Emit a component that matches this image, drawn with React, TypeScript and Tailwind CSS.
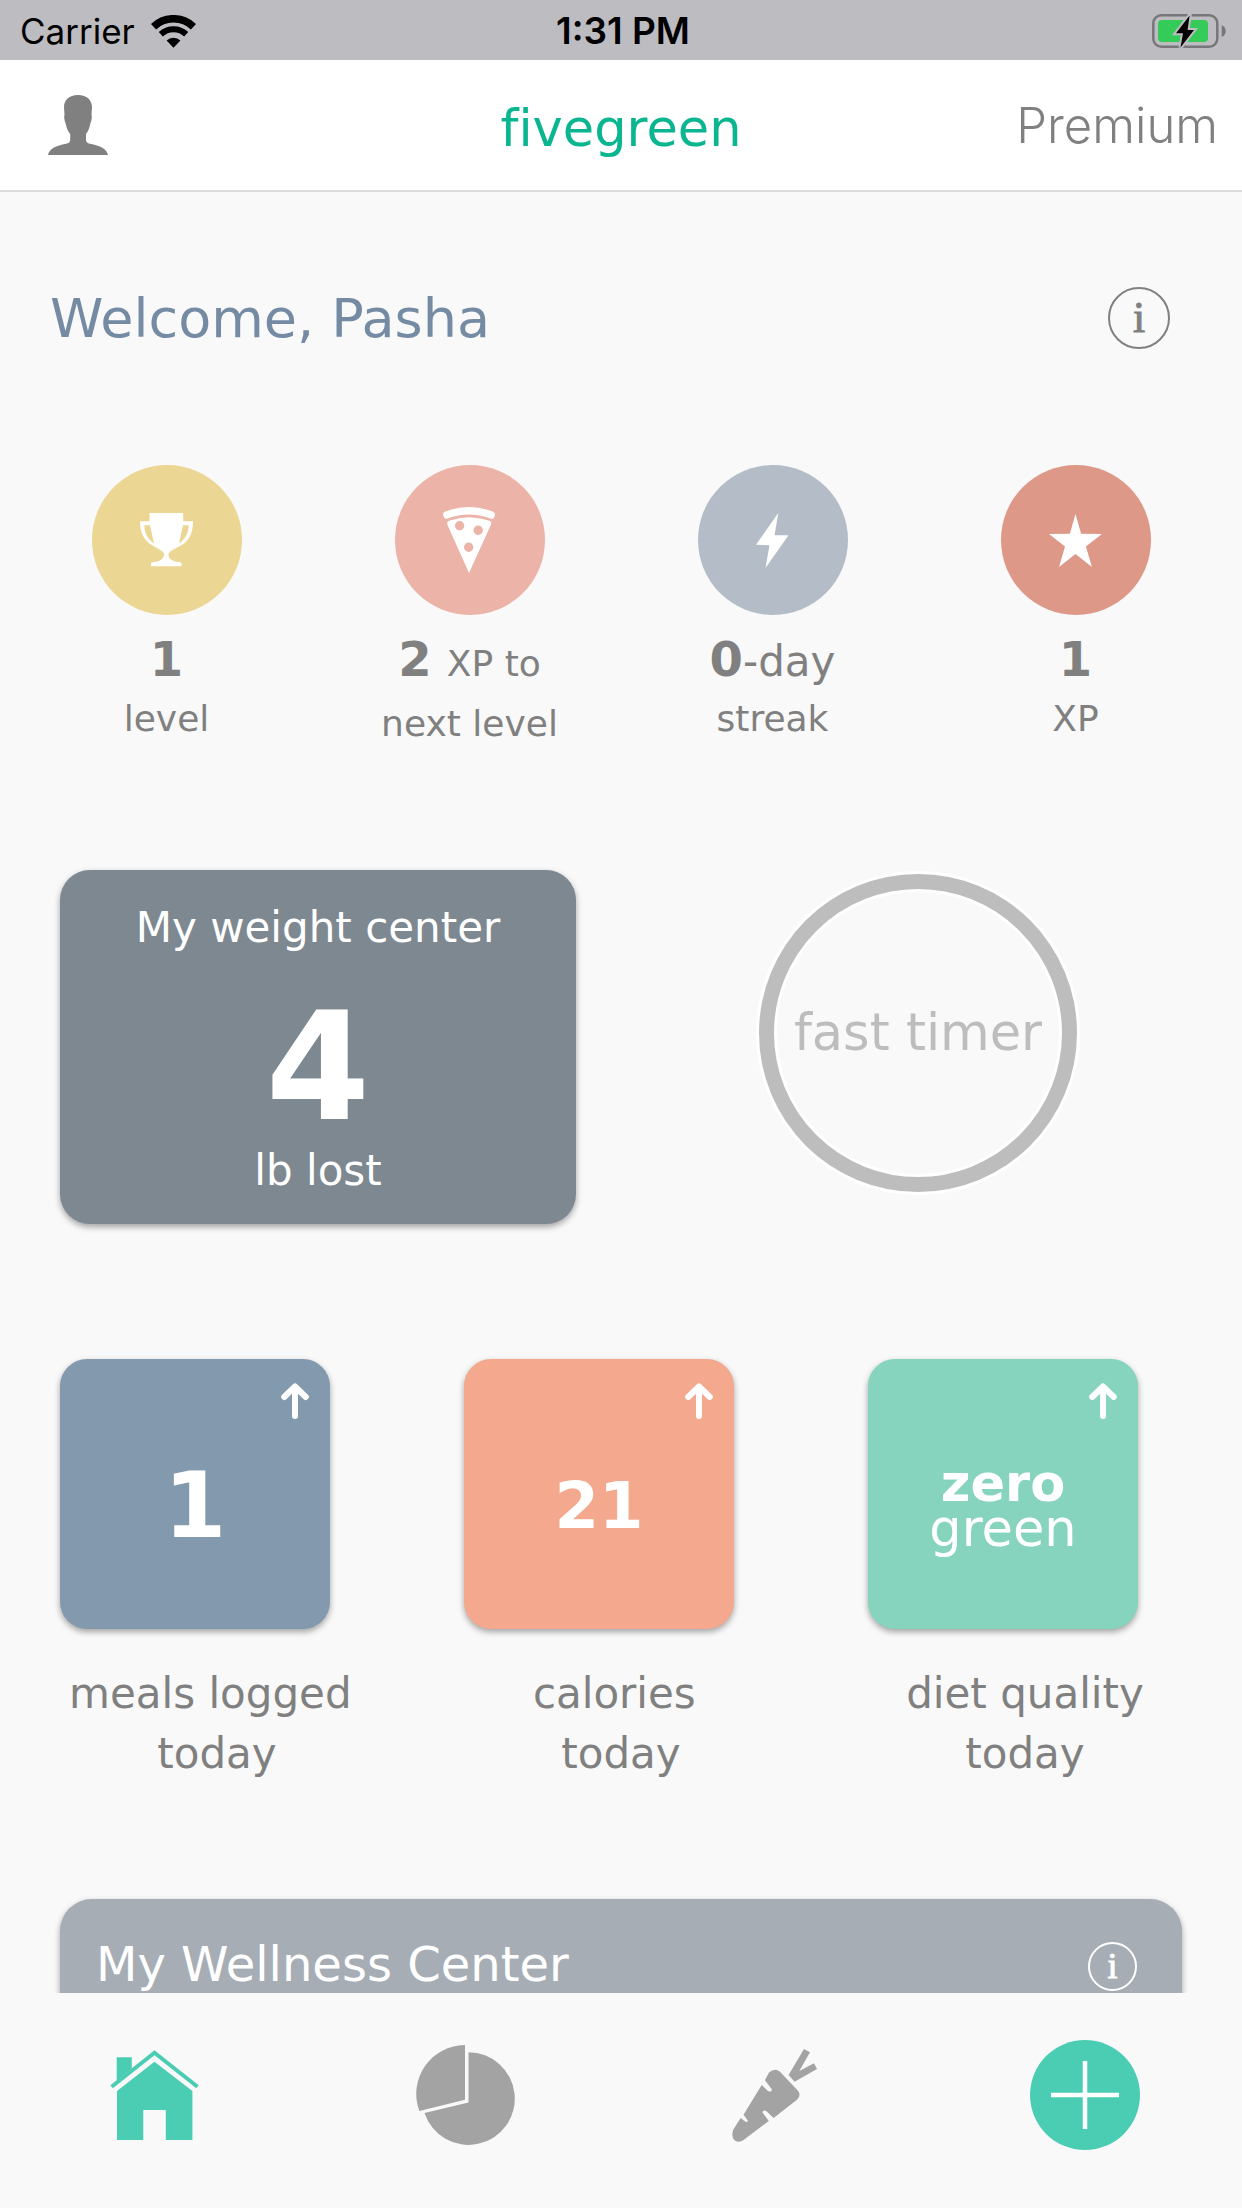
import type { ReactNode } from "react";

function WifiIcon() {
  return (
    <svg width="45" height="33" viewBox="0 0 45 33" fill="none" stroke="#000" aria-hidden="true">
      <path d="M2.5 11.7A29 29 0 0 1 42.5 11.7" strokeWidth="7.5" />
      <path d="M9.8 19.3A18.5 18.5 0 0 1 35.2 19.3" strokeWidth="6" />
      <path d="M15.6 25.5A10 10 0 0 1 29.4 25.5L22.5 32.7Z" fill="#000" stroke="none" />
    </svg>
  );
}

function BatteryIcon() {
  return (
    <svg width="74" height="35" viewBox="0 0 74 35" aria-hidden="true">
      <rect x="1.3" y="1.3" width="64" height="31.4" rx="8" fill="none" stroke="#77777b" strokeWidth="2.5" />
      <rect x="6" y="6" width="50" height="22" rx="4" fill="#35cb58" />
      <path d="M69.7 11Q73.7 13 73.7 17T69.7 23Z" fill="#77777b" />
      <path
        d="M37.6 1.5L24 19.3H31L28.5 33.5L42 16H35.6Z"
        fill="#000"
        stroke="#bdbcc1"
        strokeWidth="4"
        paintOrder="stroke"
      />
    </svg>
  );
}

function PersonIcon() {
  return (
    <svg width="60" height="60" viewBox="0 0 60 60" fill="#808080" aria-hidden="true">
      <path d="M30 0C39 0 44 5.500 44 12L43.500 19.500Q44.500 23 42.500 28C41.500 33 40 36.500 38 39V45Q38 48 42 48.700C52 50.500 59 54 60 60H0C1 54 8 50.500 18 48.700Q22.200 48 22.200 45V39C20 36.500 18.500 33 17.500 28Q15.500 23 16.500 19.500L16 12C16 5.500 21 0 30 0Z" />
    </svg>
  );
}

function TrophyIcon() {
  return (
    <svg width="53" height="54" viewBox="0 0 53 54" fill="#fff" fillRule="evenodd" aria-hidden="true">
      <path d="M9.5 0H43.2V8.3H53C53 22 48 30 37 34.500C32 37 28.700 39 28.500 41C28.300 45 31 48.500 39 49Q41.600 49 41.600 50.500V53.300H11V50.500Q11 49 14 49C21 48.500 24.300 45 24 41C23.800 39 20 36.500 16 34.500C5 29 0 22 0 8.300H9.500ZM4.400 12.300H10L14 30.500C7.500 26 4.400 20 4.400 12.300ZM48.600 12.300H43L39 30.500C45.500 26 48.600 20 48.600 12.300Z" />
    </svg>
  );
}

function PizzaIcon() {
  return (
    <svg width="53" height="66" viewBox="0 0 53 66" fill="#fff" fillRule="evenodd" aria-hidden="true">
      <path d="M2.500 4.500Q26 -4.500 49.500 4.500Q52.500 5.500 52 8L51 10.500Q50 12.500 47.500 11.500Q26 3.500 4.500 11.500Q2 12.500 1 10.500L0.200 8Q-0.500 5.500 2.500 4.500Z" />
      <path d="M6 13.800Q26 6.500 46.500 13.800Q49 15 48 17.500L26 66L4.300 17.500Q3.500 15 6 13.800ZM11.900 18.700a4.700 4.700 0 1 0 9.400 0a4.700 4.700 0 1 0 -9.400 0ZM30.500 23.300a4.700 4.700 0 1 0 9.400 0a4.700 4.700 0 1 0 -9.400 0ZM21 40.300a4.700 4.700 0 1 0 9.400 0a4.700 4.700 0 1 0 -9.400 0Z" />
    </svg>
  );
}

function BoltIcon() {
  return (
    <svg width="34" height="55" viewBox="0 0 34 55" fill="#fff" aria-hidden="true">
      <path d="M22.2 0L18.600 22.300H32.500L9.500 55L13.500 32.300L0 31.800Z" />
    </svg>
  );
}

function StarIcon() {
  return (
    <svg width="53" height="53" viewBox="0 0 52.300 52.300" fill="#fff" aria-hidden="true">
      <path d="M26.100 0L31.700 19.500L52.300 19.700L36.400 32L42.400 52.300L26.100 39.500L9.900 52.300L15.800 32L0 19.700L20.600 19.500Z" />
    </svg>
  );
}

function ArrowUpIcon() {
  return (
    <svg
      width="28"
      height="36"
      viewBox="0 0 28 36"
      fill="none"
      stroke="#fff"
      strokeWidth="6"
      strokeLinecap="round"
      strokeLinejoin="round"
      aria-hidden="true"
    >
      <path d="M14 33V4M3.200 14L14 3.500L24.800 14" />
    </svg>
  );
}

function HomeIcon() {
  return (
    <svg width="90" height="90" viewBox="0 0 90 90" fill="#4bcdb3" aria-hidden="true">
      <path d="M1.600 36.700L44.500 2.800L87.500 36.700" fill="none" stroke="#4bcdb3" strokeWidth="4" />
      <path d="M6.700 7.300H21.800V18.500L6.700 31Z" />
      <path d="M44.500 11.700L82.400 41V90H55.800V60H33.300V90H7V41Z" />
    </svg>
  );
}

function PieIcon() {
  return (
    <svg width="100" height="100" viewBox="0 0 100 100" fill="#a3a3a3" aria-hidden="true">
      <path d="M50 0V54.700L4.300 66A49 49 0 0 1 50 0Z" />
      <path d="M53.500 7.300A46.300 46.300 0 1 1 9.500 68L53.500 57.500Z" />
    </svg>
  );
}

function CarrotIcon() {
  return (
    <svg width="86" height="93" viewBox="0 0 86 93" fill="#a3a3a3" aria-hidden="true">
      <path d="M72 0L78 3.300L67.300 22L82 14.300L85 20L62.600 32.700L56.600 26Z" />
      <path d="M37 23.500Q42.500 18.500 48 22.700L66 41.700Q69.500 46.500 65 50.700L41.600 69L34.500 62.300Q31 60 30.500 63.500L36.800 72L11.900 90.700Q6 95 1.800 90.500Q-1 86 1.600 80L8.700 69L13.500 72.700Q16 73.500 15.800 71.500L11.500 65.700L29.700 36L36 42Q40 43.500 40 40.500L32.900 31.300Z" />
    </svg>
  );
}

function PlusIcon() {
  return (
    <svg width="68" height="68" viewBox="0 0 68 68" stroke="#fff" strokeWidth="4.500" aria-hidden="true">
      <path d="M34 0V68M0 34H68" />
    </svg>
  );
}

function Stat({
  color,
  icon,
  children,
  caption,
}: {
  color: string;
  icon: ReactNode;
  children: ReactNode;
  caption: string;
}) {
  return (
    <div className="flex flex-col items-center text-center text-[#808080]">
      <div className={`flex size-[150px] items-center justify-center rounded-full ${color}`}>{icon}</div>
      <p className="mt-[14px] text-[48px] leading-[60px]">{children}</p>
      <p className="text-[36px] leading-[60px]">{caption}</p>
    </div>
  );
}

function Tile({ color, label, children }: { color: string; label: string; children: ReactNode }) {
  return (
    <div>
      <button
        type="button"
        className={`relative ml-[45px] flex size-[270px] flex-col items-center justify-center rounded-[27px] pt-6 text-white shadow-[0_3px_6px_rgba(0,0,0,0.35)] ${color}`}
      >
        <span className="absolute top-6 right-[21px]">
          <ArrowUpIcon />
        </span>
        {children}
      </button>
      <p className="mt-[35px] text-center text-[42px] leading-[60px] whitespace-pre text-[#808080]">
        {label}
        <br />
        today
      </p>
    </div>
  );
}

export default function App() {
  return (
    <div className="flex h-dvh flex-col bg-[#f9f9f9] font-['DejaVu_Sans',sans-serif]">
      <div className="grid h-[60px] shrink-0 grid-cols-[1fr_auto_1fr] items-center bg-[#bdbcc1] pt-0.5 pr-4 pl-5 font-['Inter',sans-serif] text-[35px] leading-[58px] text-black">
        <div className="flex items-center gap-4">
          <span>Carrier</span>
          <WifiIcon />
        </div>
        <span className="text-center text-[37px] font-semibold">1:31 PM</span>
        <div className="flex justify-end">
          <BatteryIcon />
        </div>
      </div>

      <header className="grid h-[132px] shrink-0 grid-cols-3 items-center border-b-2 border-[#dcdcdc] bg-white">
        <button type="button" aria-label="Profile" className="ml-12 justify-self-start">
          <PersonIcon />
        </button>
        <h1 className="pt-2 text-center text-[51px] leading-[60px] text-[#0ab68f] [font-variant-ligatures:none]">
          fivegreen
        </h1>
        <a
          href="#premium"
          className="mr-6 justify-self-end pt-0.5 font-['Inter',sans-serif] text-[49px] leading-[60px] font-light text-[#808080]"
        >
          Premium
        </a>
      </header>

      <main className="min-h-0 flex-1 overflow-y-auto pt-[95px] [scrollbar-width:none]">
        <div className="flex h-[62px] items-center justify-between pr-[72px] pl-[50px]">
          <h2 className="pt-0.5 text-[54px] leading-[62px] text-[#748ba3]">Welcome, Pasha</h2>
          <button
            type="button"
            aria-label="About this screen"
            className="flex size-[62px] items-center justify-center rounded-full border-2 border-[#808080] font-['Liberation_Serif',serif] text-[44px] leading-none text-[#808080] [-webkit-text-stroke:1px]"
          >
            i
          </button>
        </div>

        <section className="mt-[116px] grid grid-cols-4 px-[15px]">
          <Stat color="bg-[#ebd693]" icon={<TrophyIcon />} caption="level">
            <b>1</b>
          </Stat>
          <Stat color="bg-[#ecb4a8]" icon={<PizzaIcon />} caption="next level">
            <b>2</b> <span className="text-[36px]">XP to</span>
          </Stat>
          <Stat color="bg-[#b4bdc7]" icon={<BoltIcon />} caption="streak">
            <b>0</b>
            <span className="text-[42px] leading-none">-day</span>
          </Stat>
          <Stat color="bg-[#dd9888]" icon={<StarIcon />} caption="XP">
            <b>1</b>
          </Stat>
        </section>

        <section className="mt-[116px] flex items-center pl-[60px]">
          <button
            type="button"
            className="flex w-[516px] flex-col items-center rounded-[30px] bg-[#7e8891] pt-7 pb-[23px] text-white shadow-[0_3px_6px_rgba(0,0,0,0.35)]"
          >
            <span className="text-[42px] leading-[60px]">My weight center</span>
            <span className="mt-[35px] text-[150px] leading-[148px] font-bold">4</span>
            <span className="text-[42px] leading-[60px]">lb lost</span>
          </button>
          <div className="flex flex-1 justify-center pb-7 pl-[18px]">
            <button type="button" className="rounded-full bg-white p-[3px]">
              <span className="block rounded-full bg-[#bdbdbd] p-[15px]">
                <span className="flex size-[288px] items-center justify-center rounded-full border-3 border-white bg-[#f9f9f9] text-[51px] leading-[60px] whitespace-nowrap text-[#bdbdbd]">
                  fast timer
                </span>
              </span>
            </button>
          </div>
        </section>

        <section className="mt-[135px] grid grid-cols-3 px-[15px]">
          <Tile color="bg-[#8399ad]" label={"meals logged\u00a0"}>
            <span className="text-[90px] leading-[90px] font-bold">1</span>
          </Tile>
          <Tile color="bg-[#f4a98e]" label={"calories\u00a0"}>
            <span className="text-[64px] leading-[90px] font-bold">21</span>
          </Tile>
          <Tile color="bg-[#86d3be]" label="diet quality">
            <span className="text-[51px] leading-[45px] font-bold">zero</span>
            <span className="text-[51px] leading-[45px]">green</span>
          </Tile>
        </section>

        <section className="mx-[60px] mt-[115px] min-h-[360px] rounded-[32px] bg-[#a7adb5] pt-[35px] pr-[45px] pl-9 text-white shadow-[0_3px_6px_rgba(0,0,0,0.35)]">
          <div className="flex items-center justify-between">
            <h2 className="text-[48px] leading-[60px]">My Wellness Center</h2>
            <button
              type="button"
              aria-label="About the Wellness Center"
              className="mt-1 flex size-[49px] items-center justify-center rounded-full border-2 border-white font-['Liberation_Serif',serif] text-[36px] leading-none [-webkit-text-stroke:1px]"
            >
              i
            </button>
          </div>
        </section>
      </main>

      <nav className="grid h-[215px] shrink-0 grid-cols-4 place-items-center bg-[#f9f9f9] pr-0.5 pb-[11px]">
        <button type="button" aria-label="Home">
          <HomeIcon />
        </button>
        <button type="button" aria-label="Statistics">
          <PieIcon />
        </button>
        <button type="button" aria-label="Food">
          <CarrotIcon />
        </button>
        <button
          type="button"
          aria-label="Add"
          className="flex size-[110px] items-center justify-center rounded-full bg-[#4bcdb3]"
        >
          <PlusIcon />
        </button>
      </nav>
    </div>
  );
}
